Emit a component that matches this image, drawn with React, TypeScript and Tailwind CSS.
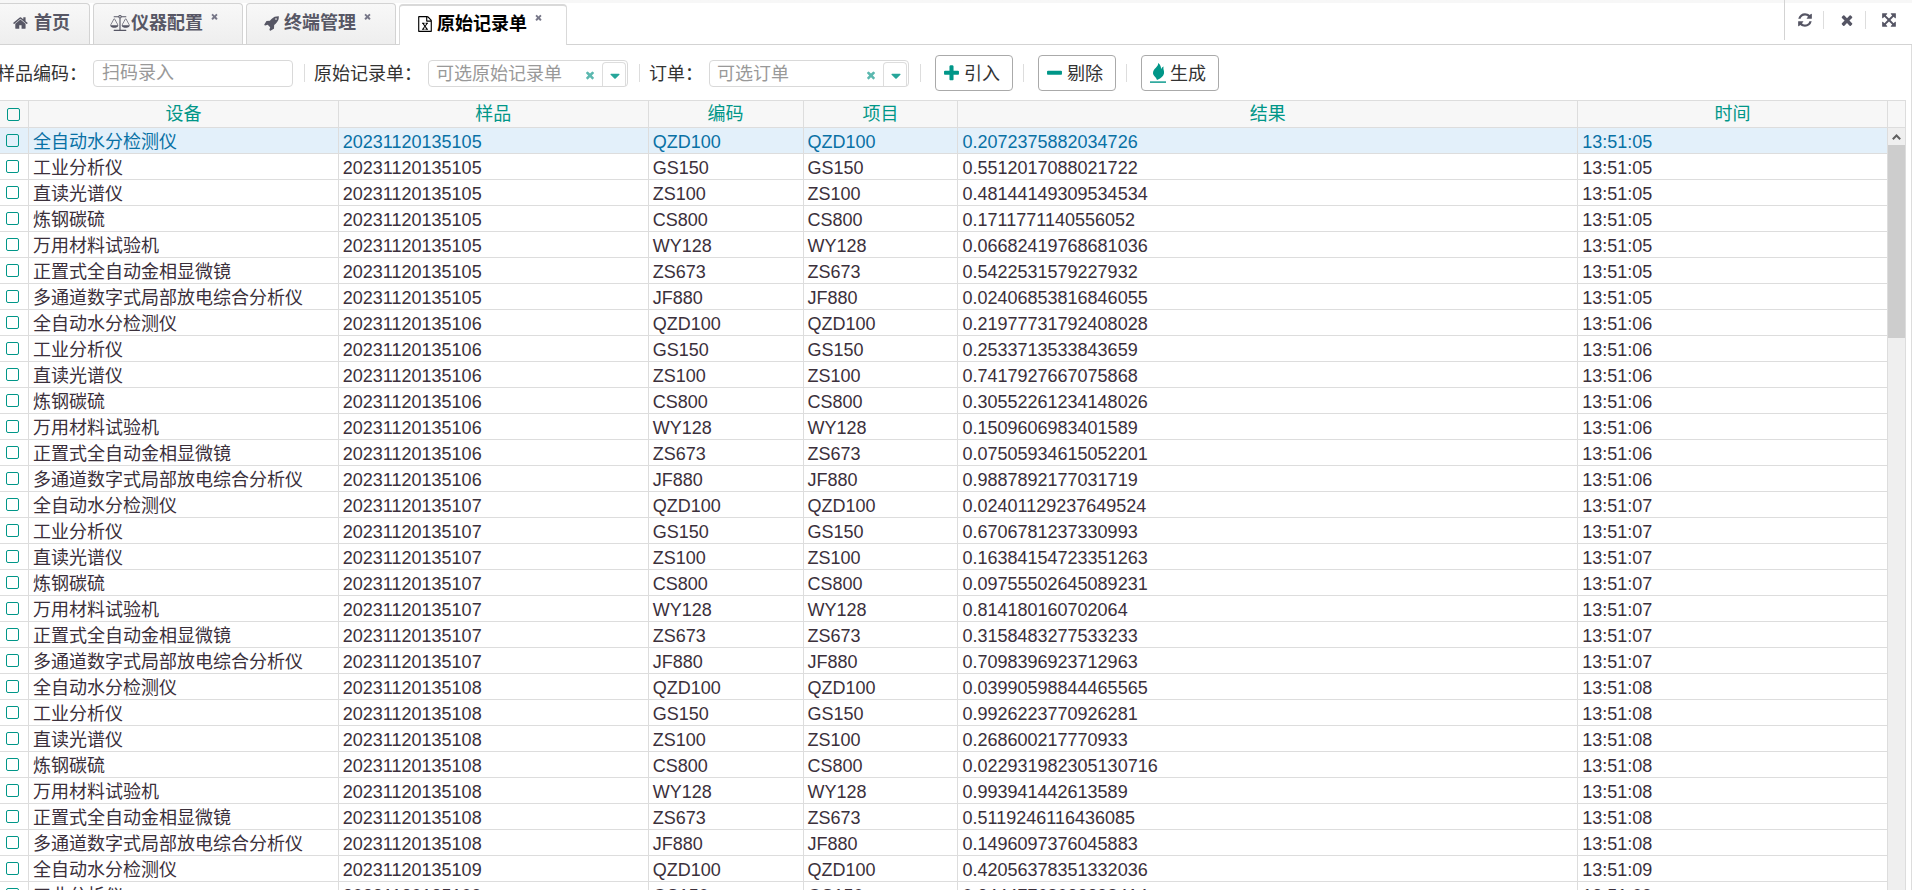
import { useState, type ReactNode } from "react";

// Font Awesome 4 outlines: [view box width, path]
const ICONS = {
  home: [1792, "M1408 992v480q0 26-19 45t-45 19h-384v-384h-256v384h-384q-26 0-45-19t-19-45v-480q0-1 .5-3t.5-3l575-474 575 474q1 2 1 6zm223-69l-62 74q-8 9-21 11h-3q-13 0-21-7l-692-577-692 577q-12 8-24 7-13-2-21-11l-62-74q-8-10-7-23.5t11-21.5l719-599q32-26 76-26t76 26l244 204v-195q0-14 9-23t23-9h192q14 0 23 9t9 23v408l219 182q10 8 11 21.5t-7 23.5z"],
  balance: [2176, "M1728 448l-384 704h768zm-1280 0l-384 704h768zm821-192q-14 40-45.5 71.5t-71.5 45.5v1291h608q14 0 23 9t9 23v64q0 14-9 23t-23 9h-1344q-14 0-23-9t-9-23v-64q0-14 9-23t23-9h608v-1291q-40-14-71.5-45.5t-45.5-71.5h-491q-14 0-23-9t-9-23v-64q0-14 9-23t23-9h491q21-57 70-92.5t111-35.5 111 35.5 70 92.5h491q14 0 23 9t9 23v64q0 14-9 23t-23 9h-491zm-181 16q33 0 56.5-23.5t23.5-56.5-23.5-56.5-56.5-23.5-56.5 23.5-23.5 56.5 23.5 56.5 56.5 23.5zm1088 880q0 73-46.5 131t-117.5 91-144.5 49.5-139.5 16.5-139.5-16.5-144.5-49.5-117.5-91-46.5-131q0-11 35-81t92-174.5 107-195.5 102-184 56-100q18-33 56-33t56 33q4 7 56 100t102 184 107 195.5 92 174.5 35 81zm-1280 0q0 73-46.5 131t-117.5 91-144.5 49.5-139.5 16.5-139.5-16.5-144.5-49.5-117.5-91-46.5-131q0-11 35-81t92-174.5 107-195.5 102-184 56-100q18-33 56-33t56 33q4 7 56 100t102 184 107 195.5 92 174.5 35 81z"],
  rocket: [1792, "M1440 448q0-40-28-68t-68-28-68 28-28 68 28 68 68 28 68-28 28-68zm224-288q0 249-75.5 430.5t-253.5 360.5q-81 80-195 176l-20 379q-2 16-16 26l-384 224q-7 4-16 4-12 0-23-9l-64-64q-13-14-8-32l85-276-281-281-276 85q-3 1-9 1-14 0-23-9l-64-64q-17-19-5-39l224-384q10-14 26-16l379-20q96-114 176-195 188-187 358-258t431-71q14 0 24 9.5t10 22.5z"],
  excel: [1792, "M1596 380q28 28 48 76t20 88v1152q0 40-28 68t-68 28h-1344q-40 0-68-28t-28-68v-1600q0-40 28-68t68-28h896q40 0 88 20t76 48zm-444-244v376h376q-10-29-22-41l-313-313q-12-12-41-22zm384 1528v-1024h-416q-40 0-68-28t-28-68v-416h-768v1536h1280zm-979-234v106h281v-106h-75l103-161q5-7 10-16.5t7.5-13.5 3.5-4h2q1 4 5 10 2 4 4.5 7.5t6 8 6.5 8.5l107 161h-76v106h291v-106h-68l-192-273 195-282h67v-107h-279v107h74l-103 159q-4 7-10 16.5t-9 13.5l-2 3h-2q-1-4-5-10-6-11-17-23l-106-159h76v-107h-290v107h68l189 272-194 283h-68z"],
  times: [1792, "M1490 1322q0 40-28 68l-136 136q-28 28-68 28t-68-28l-294-294-294 294q-28 28-68 28t-68-28l-136-136q-28-28-28-68t28-68l294-294-294-294q-28-28-28-68t28-68l136-136q28-28 68-28t68 28l294 294 294-294q28-28 68-28t68 28l136 136q28 28 28 68t-28 68l-294 294 294 294q28 28 28 68z"],
  plus: [1792, "M1600 736v192q0 40-28 68t-68 28h-416v416q0 40-28 68t-68 28h-192q-40 0-68-28t-28-68v-416h-416q-40 0-68-28t-28-68v-192q0-40 28-68t68-28h416v-416q0-40 28-68t68-28h192q40 0 68 28t28 68v416h416q40 0 68 28t28 68z"],
  minus: [1792, "M1600 736v192q0 40-28 68t-68 28h-1216q-40 0-68-28t-28-68v-192q0-40 28-68t68-28h1216q40 0 68 28t28 68z"],
  caret: [1792, "M1408 704q0 26-19 45l-448 448q-19 19-45 19t-45-19l-448-448q-19-19-19-45t19-45 45-19h896q26 0 45 19t19 45z"],
  refresh: [1792, "M1639 1056q0 5-1 7-64 268-268 434.5t-478 166.5q-146 0-282.5-55t-243.5-157l-129 129q-19 19-45 19t-45-19-19-45v-448q0-26 19-45t45-19h448q26 0 45 19t19 45-19 45l-137 137q71 66 161 102t187 36q134 0 250-65t186-179q11-17 53-117 8-23 30-23h192q13 0 22.5 9.5t9.5 22.5zm25-800v448q0 26-19 45t-45 19h-448q-26 0-45-19t-19-45 19-45l138-138q-148-137-349-137-134 0-250 65t-186 179q-11 17-53 117-8 23-30 23h-199q-13 0-22.5-9.5t-9.5-22.5v-7q65-268 270-434.5t480-166.5q146 0 284 55.5t245 156.5l130-129q19-19 45-19t45 19 19 45z"],
  expand: [1792, "M1411 541l-355 355 355 355 144-144q29-31 70-14 39 17 39 59v448q0 26-19 45t-45 19h-448q-42 0-59-40-17-39 14-69l144-144-355-355-355 355 144 144q31 30 14 69-17 40-59 40h-448q-26 0-45-19t-19-45v-448q0-42 40-59 39-17 69 14l144 144 355-355-355-355-144 144q-19 19-45 19-12 0-24-5-40-17-40-59v-448q0-26 19-45t45-19h448q42 0 59 40 17 39-14 69l-144 144 355 355 355-355-144-144q-31-30-14-69 17-40 59-40h448q26 0 45 19t19 45v448q0 42-39 59-13 5-25 5-26 0-45-19z"],
} as const;

type IconName = keyof typeof ICONS;

function Icon({ name, className }: { name: IconName; className: string }) {
  const [width, d] = ICONS[name];
  return (
    <svg viewBox={`0 0 ${width} 1792`} fill="currentColor" className={`shrink-0 ${className}`} aria-hidden="true">
      <path d={d} />
    </svg>
  );
}

// Flame standing on a thin bar
function FireIcon() {
  return (
    <svg viewBox="0 0 16 20" className="mr-1 ml-0.5 h-5 w-4 shrink-0" fill="#009688" aria-hidden="true">
      <path d="M8 0C9 3.500 3 5.500 3 10C3 13 5.800 13.500 7 17C11.500 15 14.500 12.500 14 8.500C13.800 6.800 13 6 13.600 3.500C12.200 4.300 11.400 5.200 11 6.500C11.300 4 10.500 1.500 8 0Z" />
      <rect y="18.400" width="16" height="1.400" />
    </svg>
  );
}

const DEVICES = [
  ["全自动水分检测仪", "QZD100"],
  ["工业分析仪", "GS150"],
  ["直读光谱仪", "ZS100"],
  ["炼钢碳硫", "CS800"],
  ["万用材料试验机", "WY128"],
  ["正置式全自动金相显微镜", "ZS673"],
  ["多通道数字式局部放电综合分析仪", "JF880"],
];

const RESULTS = [
  "0.2072375882034726",
  "0.5512017088021722",
  "0.48144149309534534",
  "0.1711771140556052",
  "0.06682419768681036",
  "0.5422531579227932",
  "0.02406853816846055",
  "0.21977731792408028",
  "0.2533713533843659",
  "0.7417927667075868",
  "0.30552261234148026",
  "0.1509606983401589",
  "0.07505934615052201",
  "0.9887892177031719",
  "0.02401129237649524",
  "0.6706781237330993",
  "0.16384154723351263",
  "0.09755502645089231",
  "0.814180160702064",
  "0.3158483277533233",
  "0.7098396923712963",
  "0.03990598844465565",
  "0.9926223770926281",
  "0.268600217770933",
  "0.022931982305130716",
  "0.993941442613589",
  "0.5119246116436085",
  "0.1496097376045883",
  "0.42056378351332036",
  "0.24447768033398414",
];

// Every batch of seven readings is taken one second after the last
const ROWS = RESULTS.map((result, i) => {
  const [device, code] = DEVICES[i % 7];
  const second = 5 + Math.floor(i / 7);
  return { device, code, result, sample: `2023112013510${second}`, time: `13:51:0${second}` };
});

const TABS: { icon: IconName; iconClass: string; title: string }[] = [
  { icon: "balance", iconClass: "h-4 w-5 mr-px", title: "仪器配置" },
  { icon: "rocket", iconClass: "size-4 mr-1 ml-px", title: "终端管理" },
  { icon: "excel", iconClass: "size-4 mr-1 ml-px", title: "原始记录单" },
];

const COLUMNS = [
  { title: "设备", width: "w-1/6" },
  { title: "样品", width: "w-1/6" },
  { title: "编码", width: "w-1/12" },
  { title: "项目", width: "w-1/12" },
  { title: "结果", width: "w-1/3" },
  { title: "时间", width: "w-1/6" },
];

function Separator() {
  return <div className="h-[18px] w-px bg-[#dddddd]" />;
}

function TabBar() {
  const [active, setActive] = useState("原始记录单");
  return (
    <header className="flex h-[45px] border-b border-[#d3d3d3] bg-linear-to-b from-[#f7f7f7] from-[3px] to-white to-[3px]">
      <nav className="flex flex-1 gap-[3px] pt-[3px]">
        <button className="flex items-center rounded-tr border-t border-r border-[#d3d3d3] bg-linear-to-b from-[#f8f8f8] to-[#eeeeee] pt-px pr-[19px] pb-1 pl-[13px] font-bold text-[#575765]">
          <Icon name="home" className="mr-[5px] size-4" />
          首页
        </button>
        {TABS.map((tab) => (
          <div
            key={tab.title}
            className={`flex items-center rounded-t border-x pr-[23px] pb-1 pl-4 ${
              tab.title === active
                ? "-mb-px mt-px border-t-2 border-[#d9d9d9] bg-white text-black"
                : "border-t border-[#d3d3d3] bg-linear-to-b from-[#f8f8f8] to-[#eeeeee] pt-px text-[#575765]"
            }`}
          >
            <button className="flex items-center font-bold" onClick={() => setActive(tab.title)}>
              <Icon name={tab.icon} className={tab.iconClass} />
              {tab.title}
            </button>
            <button className="ml-[7px] pb-3 text-[#777788]" aria-label="关闭">
              <Icon name="times" className="size-[9px]" />
            </button>
          </div>
        ))}
      </nav>
      <div className="flex h-10 items-center border-l border-[#d3d3d3] pr-[15px] text-[#555564]">
        <button className="pr-[10px] pl-3" aria-label="刷新">
          <Icon name="refresh" className="size-4" />
        </button>
        <Separator />
        <button className="pr-[10px] pl-[15px]" aria-label="关闭">
          <Icon name="times" className="size-4" />
        </button>
        <Separator />
        <button className="pl-[15px]" aria-label="全屏">
          <Icon name="expand" className="size-4" />
        </button>
      </div>
    </header>
  );
}

function Combo({ id, placeholder }: { id: string; placeholder: string }) {
  return (
    <div className="flex h-[27px] w-[200px] rounded border border-[#d9d9d9] pr-px">
      <input
        id={id}
        placeholder={placeholder}
        className="min-w-0 flex-1 pt-px pl-[7px] outline-none placeholder:text-[#999999]"
      />
      <button className="pt-1 pr-[6px] pl-2 text-[#5bb8af]" aria-label="清除">
        <Icon name="times" className="size-3" />
      </button>
      <button
        className="mt-px flex w-6 items-center justify-center rounded-t border border-b-0 border-[#dddddd] pt-1 pl-0.5 text-[#26a69a]"
        aria-label="展开"
      >
        <Icon name="caret" className="size-4" />
      </button>
    </div>
  );
}

function ToolButton({ icon, children }: { icon: ReactNode; children: ReactNode }) {
  return (
    <button className="flex h-9 items-center rounded border border-[#aaaaaa] pr-3 pl-[6px]">
      {icon}
      <span className="pt-0.5">{children}</span>
    </button>
  );
}

function Toolbar() {
  return (
    <div className="flex items-center pt-[10px] pb-[9px]">
      <label htmlFor="sample-code" className="mr-[6px] -ml-[3px] pt-0.5">
        样品编码：
      </label>
      <input
        id="sample-code"
        placeholder="扫码录入"
        className="mr-[11px] h-[27px] w-[200px] rounded border border-[#d9d9d9] px-2 pt-px outline-none placeholder:text-[#999999]"
      />
      <Separator />
      <label htmlFor="record" className="mr-[6px] ml-[9px] pt-0.5">
        原始记录单：
      </label>
      <Combo id="record" placeholder="可选原始记录单" />
      <div className="ml-[11px]">
        <Separator />
      </div>
      <label htmlFor="order" className="mr-[6px] ml-[9px] pt-0.5">
        订单：
      </label>
      <Combo id="order" placeholder="可选订单" />
      <div className="ml-[11px] flex items-center gap-[14px]">
        <Separator />
        <ToolButton icon={<Icon name="plus" className="mr-[3px] size-[19px] text-[#009688]" />}>引入</ToolButton>
        <div className="-ml-1 flex items-center gap-[14px]">
          <Separator />
          <ToolButton icon={<Icon name="minus" className="mr-[3px] size-[19px] text-[#009688]" />}>剔除</ToolButton>
        </div>
        <div className="-ml-1 flex items-center gap-[14px]">
          <Separator />
          <ToolButton icon={<FireIcon />}>生成</ToolButton>
        </div>
      </div>
    </div>
  );
}

function CheckBox({ label }: { label: string }) {
  return (
    <input
      type="checkbox"
      aria-label={label}
      className="block size-[13px] appearance-none rounded-[2px] border border-[#009688] checked:bg-[#009688]"
    />
  );
}

function RecordTable() {
  const [selected, setSelected] = useState(0);
  return (
    <table className="w-full table-fixed border-separate border-spacing-0">
      <thead className="bg-[#f7f7f7] text-[#009688]">
        <tr className="h-7">
          <th className="w-[29px] border-y border-r border-[#dddddd] pl-[7px]">
            <CheckBox label="全选" />
          </th>
          {COLUMNS.map((col) => (
            <th
              key={col.title}
              className={`border-y border-r border-[#dddddd] pt-px leading-[25px] font-normal ${col.width}`}
            >
              {col.title}
            </th>
          ))}
        </tr>
      </thead>
      <tbody>
        {ROWS.map((row, i) => (
          <tr
            key={i}
            onClick={() => setSelected(i)}
            className={`h-[26px] ${i === selected ? "bg-[#e3f0fa] text-[#0971a5]" : "text-[#3b303b]"}`}
          >
            <td className="border-r border-b border-[#dddddd] pl-[6px]">
              <CheckBox label={row.device} />
            </td>
            {[row.device, row.sample, row.code, row.code, row.result, row.time].map((text, c) => (
              <td
                key={c}
                className="overflow-hidden border-r border-b border-[#dddddd] pt-[3px] pl-1 leading-[22px] whitespace-nowrap"
              >
                {text}
              </td>
            ))}
          </tr>
        ))}
      </tbody>
    </table>
  );
}

function ScrollBar() {
  return (
    <div className="flex w-[18px] shrink-0 flex-col border-r border-[#dddddd] bg-[#efefef]">
      <div className="h-7 shrink-0 border-y border-[#dddddd] bg-[#f7f7f7]" />
      <div className="flex h-[17px] shrink-0 items-center justify-center">
        <svg viewBox="0 0 9 6" className="h-[6px] w-[9px]" aria-hidden="true">
          <path d="M0.800 5.200L4.500 1.500L8.200 5.200" fill="none" stroke="#606060" strokeWidth="2" />
        </svg>
      </div>
      <div className="h-[193px] shrink-0 bg-[#cdcdcd]" />
    </div>
  );
}

export default function App() {
  return (
    <div className="flex h-screen flex-col overflow-hidden bg-white font-['Liberation_Sans','Noto_Sans_CJK_SC',sans-serif] text-lg leading-[26px] text-[#333333]">
      <TabBar />
      <main className="flex min-h-0 flex-1 flex-col border-r border-[#dddddd]">
        <Toolbar />
        <div className="mr-[5px] flex min-h-0 flex-1 overflow-hidden">
          <div className="min-w-0 flex-1">
            <RecordTable />
          </div>
          <ScrollBar />
        </div>
      </main>
    </div>
  );
}
